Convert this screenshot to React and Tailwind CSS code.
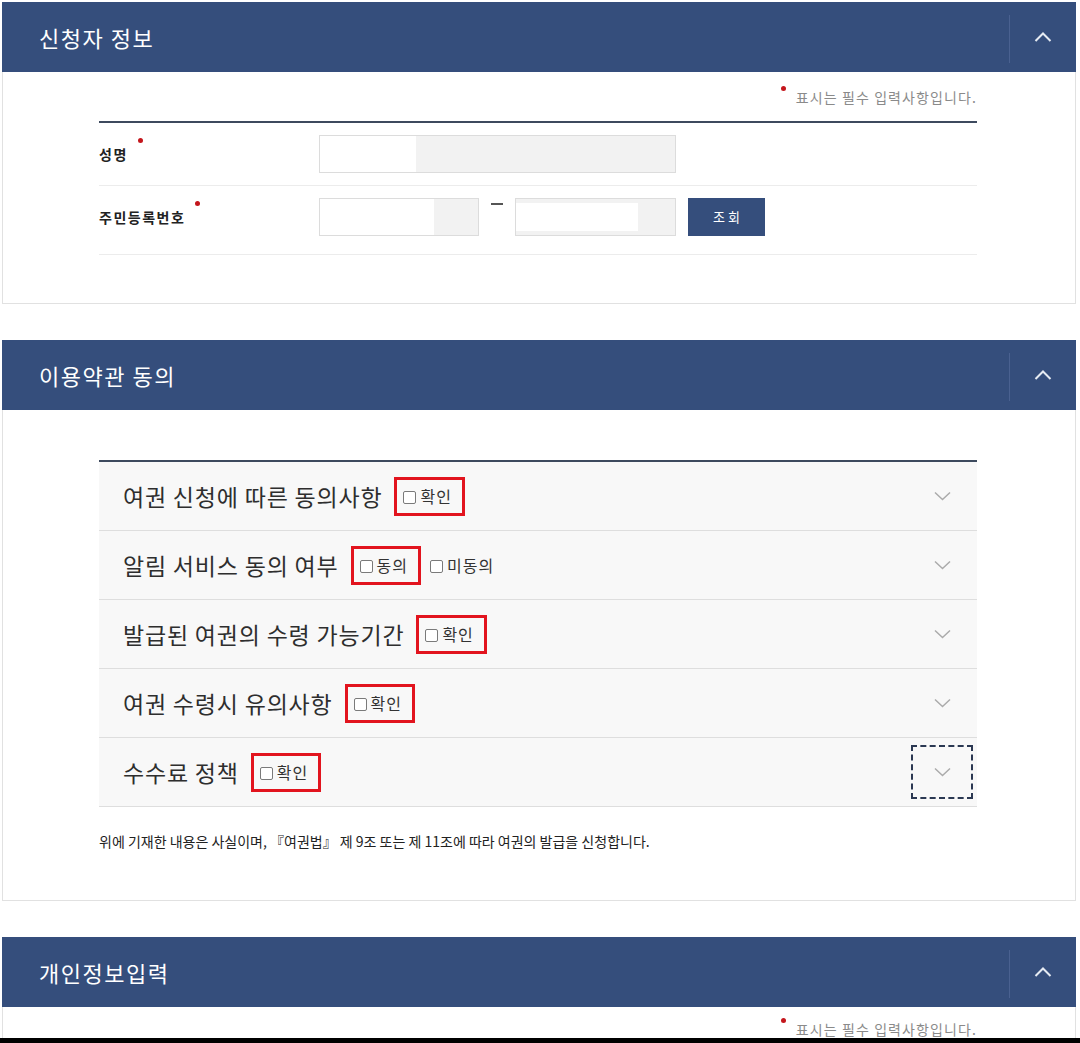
import { useState } from 'react';

const FONT = "font-['Noto_Sans_CJK_KR','Malgun_Gothic',sans-serif]";

function PanelHeader({ title }) {
  return (
    <div className="h-[70px] bg-[#354e7c] flex items-center justify-between">
      <h2 className="pl-[37px] text-[22px] text-white tracking-[1.5px] leading-none">{title}</h2>
      <div className="flex items-center h-full">
        <div className="w-px h-[48px] bg-[#4a6190] mt-[4px]" />
        <button className="w-[66px] h-full flex items-center justify-center">
          <svg width="18" height="10" viewBox="0 0 18 10" fill="none">
            <path d="M1.5 9L9 1.5L16.5 9" stroke="#e6ebf3" strokeWidth="2" />
          </svg>
        </button>
      </div>
    </div>
  );
}

function RequiredNote({ tight }) {
  return (
    <div className={`flex justify-end items-start ${tight ? 'pt-[11px]' : 'pt-[14px]'}`}>
      <span className="w-[5px] h-[5px] rounded-full bg-[#c4161c]" />
      <span className="ml-[10px] mt-[2px] text-[14px] text-[#8a8a8a] leading-[18px] tracking-[1.1px]">
        표시는 필수 입력사항입니다.
      </span>
    </div>
  );
}

function Label({ children }) {
  return (
    <div className="w-[220px] shrink-0 flex items-center">
      <span className="relative text-[14px] font-bold text-[#222] leading-[20px] tracking-[1.5px]">
        {children}
        <span className="absolute -top-[6px] -right-[15px] w-[5px] h-[5px] rounded-full bg-[#c4161c]" />
      </span>
    </div>
  );
}

// 입력칸 (가려진 부분은 흰 블록으로 표시)
function Field({ width, cover, inset }) {
  return (
    <div className={`${width} h-[38px] border border-[#dcdcdc] bg-[#f2f2f2] flex`}>
      <div className={`${cover} bg-white ${inset ? 'my-[4px]' : ''}`} />
    </div>
  );
}

function Check({ label, boxed }) {
  const [on, setOn] = useState(false);
  const inner = (
    <label className="flex items-center gap-[4px] cursor-pointer">
      <input
        type="checkbox"
        checked={on}
        onChange={() => setOn(!on)}
        className="appearance-none w-[13px] h-[13px] border border-[#7a7a7a] rounded-[2px] bg-white mt-[3px] checked:bg-[#354e7c]"
      />
      <span className="text-[16px] text-[#333] leading-none tracking-[1px]">{label}</span>
    </label>
  );
  if (!boxed) return inner;
  return (
    <div className="h-[39px] border-[3px] border-[#e2141e] flex items-center pl-[6px] pr-[10px]">
      {inner}
    </div>
  );
}

const terms = [
  { title: '여권 신청에 따른 동의사항', opts: ['확인'] },
  { title: '알림 서비스 동의 여부', opts: ['동의', '미동의'] },
  { title: '발급된 여권의 수령 가능기간', opts: ['확인'] },
  { title: '여권 수령시 유의사항', opts: ['확인'] },
  { title: '수수료 정책', opts: ['확인'], focus: true },
];

export default function App() {
  return (
    <div className={`w-[1080px] h-[1043px] overflow-hidden bg-white flex flex-col ${FONT}`}>
      <div className="flex-1 overflow-hidden pl-[2px] pr-[4px] pt-[2px]">
        {/* 신청자 정보 */}
        <section>
          <PanelHeader title="신청자 정보" />
          <div className="border-x border-b border-[#e1e1e1] pl-[96px] pr-[98px] pb-[48px]">
            <RequiredNote />
            <div className="mt-[15px] border-t-2 border-[#3d4a5e]">
              <div className="h-[63px] flex items-center border-b border-[#ececec]">
                <Label>성명</Label>
                <Field width="w-[357px]" cover="w-[96px]" />
              </div>
              <div className="flex items-start pt-[12px] pb-[18px] border-b border-[#ececec]">
                <div className="h-[38px] flex">
                  <Label>주민등록번호</Label>
                </div>
                <Field width="w-[160px]" cover="w-[114px]" />
                <div className="w-[36px] flex justify-center">
                  <div className="w-[12px] h-[2px] bg-[#555] mt-[5px]" />
                </div>
                <Field width="w-[161px]" cover="w-[122px]" inset />
                <button className="ml-[12px] w-[77px] h-[38px] bg-[#354e7c] text-white text-[13px] tracking-[3px] pl-[3px]">
                  조회
                </button>
              </div>
            </div>
          </div>
        </section>

        {/* 이용약관 동의 */}
        <section className="mt-[36px]">
          <PanelHeader title="이용약관 동의" />
          <div className="border-x border-b border-[#e1e1e1] pl-[96px] pr-[98px] pt-[50px] pb-[50px]">
            <div className="border-t-2 border-[#3d4a5e]">
              {terms.map((t) => (
                <div key={t.title} className="h-[69px] flex items-center bg-[#f8f8f8] border-b border-[#dedede] pl-[24px] pr-[4px]">
                  <span className="text-[23px] text-[#2e2e2e] leading-none tracking-[0.8px]">{t.title}</span>
                  <div className="ml-[12px] flex items-center">
                    <Check label={t.opts[0]} boxed />
                    {t.opts[1] && (
                      <div className="ml-[9px]">
                        <Check label={t.opts[1]} />
                      </div>
                    )}
                  </div>
                  <button
                    className={`ml-auto w-[62px] h-[54px] flex items-center justify-center ${
                      t.focus ? 'border-2 border-dashed border-[#2b3852]' : ''
                    }`}
                  >
                    <svg width="17" height="10" viewBox="0 0 17 10" fill="none">
                      <path d="M1 1.5L8.5 8.5L16 1.5" stroke="#ababab" strokeWidth="1.5" />
                    </svg>
                  </button>
                </div>
              ))}
            </div>
            <p className="mt-[25px] text-[14px] text-[#222] leading-[18px] tracking-[0px]">
              위에 기재한 내용은 사실이며, 『여권법』 제 9조 또는 제 11조에 따라 여권의 발급을 신청합니다.
            </p>
          </div>
        </section>

        {/* 개인정보입력 */}
        <section className="mt-[36px]">
          <PanelHeader title="개인정보입력" />
          <div className="border-x border-[#e1e1e1] pl-[96px] pr-[98px]">
            <RequiredNote tight />
          </div>
        </section>
      </div>
      <div className="h-[5px] bg-black shrink-0" />
    </div>
  );
}
